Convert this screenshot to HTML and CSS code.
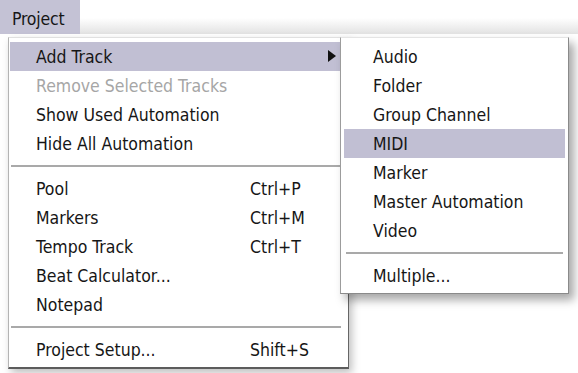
FILE: index.html
```html
<!DOCTYPE html>
<html>
<head>
<meta charset="utf-8">
<link rel="stylesheet" href="styles.css">
</head>
<body>
<div class="bar">
  <div class="title">Project</div>
</div>
<div class="stage">
  <div class="menu main">
    <div class="item hl"><span class="label">Add Track</span><svg class="arrow" width="8" height="12" viewBox="0 0 8 12"><path d="M0 0 L8 6 L0 12 Z" fill="#111"/></svg></div>
    <div class="item dis"><span class="label">Remove Selected Tracks</span></div>
    <div class="item"><span class="label">Show Used Automation</span></div>
    <div class="item"><span class="label">Hide All Automation</span></div>
    <div class="sep"></div>
    <div class="item"><span class="label">Pool</span><span class="key">Ctrl+P</span></div>
    <div class="item"><span class="label">Markers</span><span class="key">Ctrl+M</span></div>
    <div class="item"><span class="label">Tempo Track</span><span class="key">Ctrl+T</span></div>
    <div class="item"><span class="label">Beat Calculator...</span></div>
    <div class="item"><span class="label">Notepad</span></div>
    <div class="sep"></div>
    <div class="item"><span class="label">Project Setup...</span><span class="key">Shift+S</span></div>
  </div>
  <div class="menu sub">
    <div class="item"><span class="label">Audio</span></div>
    <div class="item"><span class="label">Folder</span></div>
    <div class="item"><span class="label">Group Channel</span></div>
    <div class="item hl"><span class="label">MIDI</span></div>
    <div class="item"><span class="label">Marker</span></div>
    <div class="item"><span class="label">Master Automation</span></div>
    <div class="item"><span class="label">Video</span></div>
    <div class="sep"></div>
    <div class="item"><span class="label">Multiple...</span></div>
  </div>
</div>
</body>
</html>
```
FILE: styles.css
```css
html, body {
  margin: 0;
  padding: 0;
  background: #ffffff;
  width: 578px;
  height: 373px;
  overflow: hidden;
}
body {
  font-family: "DejaVu Sans Condensed", "DejaVu Sans", sans-serif;
  font-size: 17.5px;
  color: #161616;
}
.bar {
  height: 34px;
  display: flex;
  background: linear-gradient(to bottom, #ffffff 0px, #ffffff 18px, #e2e2e2 34px);
}
.title {
  width: 68px;
  padding-left: 12px;
  background: #c4c2d5;
  line-height: 38px;
  letter-spacing: -0.2px;
}
.stage {
  position: relative;
  padding: 3px 0 0 8px;
}
.menu {
  background: #ffffff;
  box-sizing: border-box;
  display: flex;
  flex-direction: column;
  padding: 4px 0;
}
.main {
  width: 341px;
  border-left: 1px solid #b4b4b4;
  border-top: 1px solid #e0e0e0;
  border-right: 1px solid #666666;
  border-bottom: 2px solid #5c5c5c;
  padding: 4px 1px 3px 1px;
  box-shadow: 3px 4px 8px rgba(0,0,0,0.25);
}
.sub {
  position: absolute;
  left: 340px;
  top: 3px;
  width: 229px;
  border-left: 1px solid #9c9c9c;
  border-top: 1px solid #e4e4e4;
  border-right: 1px solid #8a8a8a;
  border-bottom: 1px solid #8a8a8a;
  padding: 4px 3px 3px 3px;
  box-shadow: 5px 6px 9px rgba(0,0,0,0.35);
}
.item {
  height: 29px;
  display: flex;
  align-items: center;
  position: relative;
  white-space: nowrap;
}
.main .item .label {
  padding-left: 26px;
  width: 214px;
}
.sub .item .label {
  padding-left: 29px;
}
.key {
  flex: none;
}
.hl {
  background: #c1bfd3;
}
.dis {
  color: #a6a6a6;
}
.arrow {
  position: absolute;
  left: 318px;
  top: 8px;
}
.sep {
  height: 16px;
  display: flex;
  align-items: center;
}
.sep::before {
  content: "";
  display: block;
  height: 2px;
  background: #a9a9a9;
  flex: 1;
}
.main .sep::before {
  margin: 0 6px 0 1px;
}
.sub .sep::before {
  margin: 0 2px 0 2px;
}
```
